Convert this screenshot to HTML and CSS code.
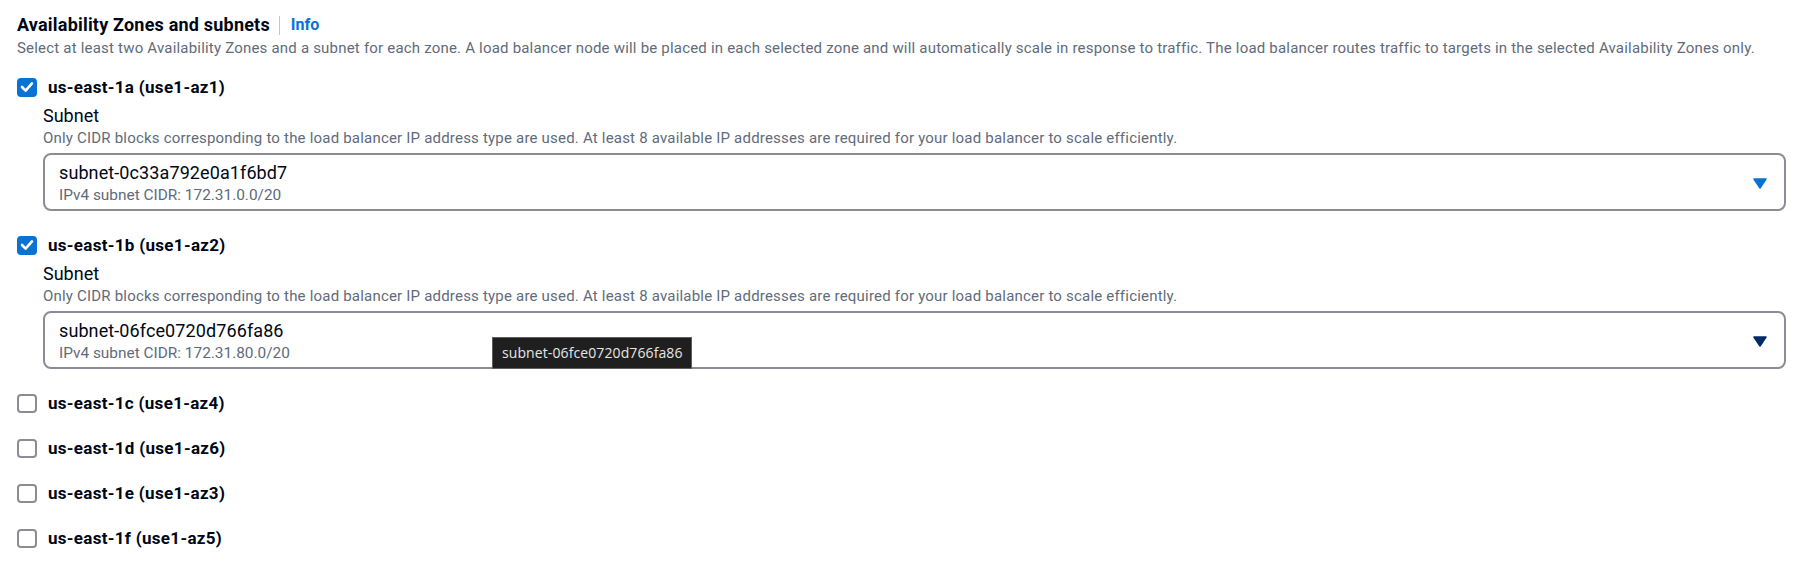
FILE: index.html
```html
<!DOCTYPE html>
<html lang="en">
<head>
<meta charset="utf-8">
<title>Availability Zones and subnets</title>
<link rel="stylesheet" href="styles.css">
</head>
<body>
<div class="section">
  <div class="header">
    <span class="title">Availability Zones and subnets</span>
    <span class="sep"></span>
    <a class="info">Info</a>
  </div>
  <div class="desc">Select at least two Availability Zones and a subnet for each zone. A load balancer node will be placed in each selected zone and will automatically scale in response to traffic. The load balancer routes traffic to targets in the selected Availability Zones only.</div>

  <div class="zones">
    <div class="zone">
      <label class="check-row">
        <span class="cb checked"><svg viewBox="0 0 20 20" width="20" height="20"><polyline points="5,10 8.6,13.6 15,6.4" fill="none" stroke="#fff" stroke-width="2.6" stroke-linecap="round" stroke-linejoin="round"/></svg></span>
        <span class="zlabel">us-east-1a (use1-az1)</span>
      </label>
      <div class="subnet">
        <div class="slabel">Subnet</div>
        <div class="sdesc">Only CIDR blocks corresponding to the load balancer IP address type are used. At least 8 available IP addresses are required for your load balancer to scale efficiently.</div>
        <div class="select">
          <div class="sel-text">
            <div class="sel-main">subnet-0c33a792e0a1f6bd7</div>
            <div class="sel-sub">IPv4 subnet CIDR: 172.31.0.0/20</div>
          </div>
          <svg class="caret" viewBox="0 0 14 11" width="14" height="11"><polygon points="1,1 13,1 7,10" fill="#0972d3" stroke="#0972d3" stroke-width="1.5" stroke-linejoin="round"/></svg>
        </div>
      </div>
    </div>

    <div class="zone">
      <label class="check-row">
        <span class="cb checked"><svg viewBox="0 0 20 20" width="20" height="20"><polyline points="5,10 8.6,13.6 15,6.4" fill="none" stroke="#fff" stroke-width="2.6" stroke-linecap="round" stroke-linejoin="round"/></svg></span>
        <span class="zlabel">us-east-1b (use1-az2)</span>
      </label>
      <div class="subnet">
        <div class="slabel">Subnet</div>
        <div class="sdesc">Only CIDR blocks corresponding to the load balancer IP address type are used. At least 8 available IP addresses are required for your load balancer to scale efficiently.</div>
        <div class="select">
          <div class="sel-text">
            <div class="sel-main">subnet-06fce0720d766fa86</div>
            <div class="sel-sub">IPv4 subnet CIDR: 172.31.80.0/20</div>
          </div>
          <svg class="caret" viewBox="0 0 14 11" width="14" height="11"><polygon points="1,1 13,1 7,10" fill="#002b66" stroke="#002b66" stroke-width="1.5" stroke-linejoin="round"/></svg>
          <div class="tooltip">subnet-06fce0720d766fa86</div>
        </div>
      </div>
    </div>

    <div class="zone">
      <label class="check-row"><span class="cb"></span><span class="zlabel">us-east-1c (use1-az4)</span></label>
    </div>
    <div class="zone">
      <label class="check-row"><span class="cb"></span><span class="zlabel">us-east-1d (use1-az6)</span></label>
    </div>
    <div class="zone">
      <label class="check-row"><span class="cb"></span><span class="zlabel">us-east-1e (use1-az3)</span></label>
    </div>
    <div class="zone">
      <label class="check-row"><span class="cb"></span><span class="zlabel">us-east-1f (use1-az5)</span></label>
    </div>
  </div>
</div>
</body>
</html>
```
FILE: styles.css
```css
* { box-sizing: border-box; }
html, body { margin: 0; padding: 0; background: #ffffff; }
body {
  font-family: Roboto, "Noto Sans", Arial, sans-serif;
  color: #000716;
}
.section {
  padding: 14px 22px 0 17px;
}
.header {
  display: flex;
  align-items: center;
  height: 22px;
}
.title {
  font-size: 18px;
  letter-spacing: 0.2px;
  font-weight: 700;
  line-height: 22px;
}
.sep {
  width: 1px;
  height: 19px;
  background: #c6c6cd;
  margin: 0 11px 0 9px;
}
.info {
  color: #0972d3;
  font-size: 16px;
  font-weight: 700;
  line-height: 22px;
}
.desc {
  margin-top: 3px;
  font-size: 15px;
  letter-spacing: 0.2px;
  line-height: 18px;
  color: #5f6b7a;
  white-space: nowrap;
}
.zones {
  margin-top: 20px;
  display: flex;
  flex-direction: column;
  gap: 24px;
}
.check-row {
  display: flex;
  align-items: center;
  gap: 11px;
  height: 20px;
}
.cb {
  width: 20px;
  height: 19px;
  border: 2px solid #8c8c94;
  border-radius: 4px;
  display: flex;
  align-items: center;
  justify-content: center;
  flex: none;
}
.cb.checked {
  background: #0972d3;
  border-color: #0972d3;
}
.cb svg { flex: none; }
.zlabel {
  font-size: 17px;
  letter-spacing: 0.3px;
  font-weight: 700;
  line-height: 20px;
}
.subnet {
  padding-left: 26px;
  margin-top: 9px;
}
.slabel {
  font-size: 18px;
  line-height: 20px;
}
.sdesc {
  margin-top: 3px;
  font-size: 15px;
  letter-spacing: 0.2px;
  line-height: 18px;
  color: #5f6b7a;
  white-space: nowrap;
}
.select {
  position: relative;
  margin-top: 6px;
  height: 58px;
  border: 2px solid #8c8c94;
  border-radius: 8px;
  padding: 8px 17px 5px 14px;
  display: flex;
  align-items: flex-start;
}
.sel-text { flex: 1; }
.sel-main {
  font-size: 18px;
  letter-spacing: 0.1px;
  line-height: 20px;
  color: #000716;
}
.sel-sub {
  margin-top: 3px;
  font-size: 15.4px;
  line-height: 18px;
  color: #5f6b7a;
}
.caret {
  align-self: center;
  flex: none;
}
.tooltip {
  position: absolute;
  left: 447px;
  top: 24px;
  width: 200px;
  height: 32px;
  background: #1f1f1f;
  border: 1px solid #5f5f5f;
  color: #e6e6e6;
  font-family: "Open Sans", "Noto Sans", sans-serif;
  font-size: 14px;
  letter-spacing: 0.1px;
  line-height: 30px;
  padding-left: 9px;
  white-space: nowrap;
}
.zones > .zone:nth-child(n+4) { margin-top: 1px; }
```
